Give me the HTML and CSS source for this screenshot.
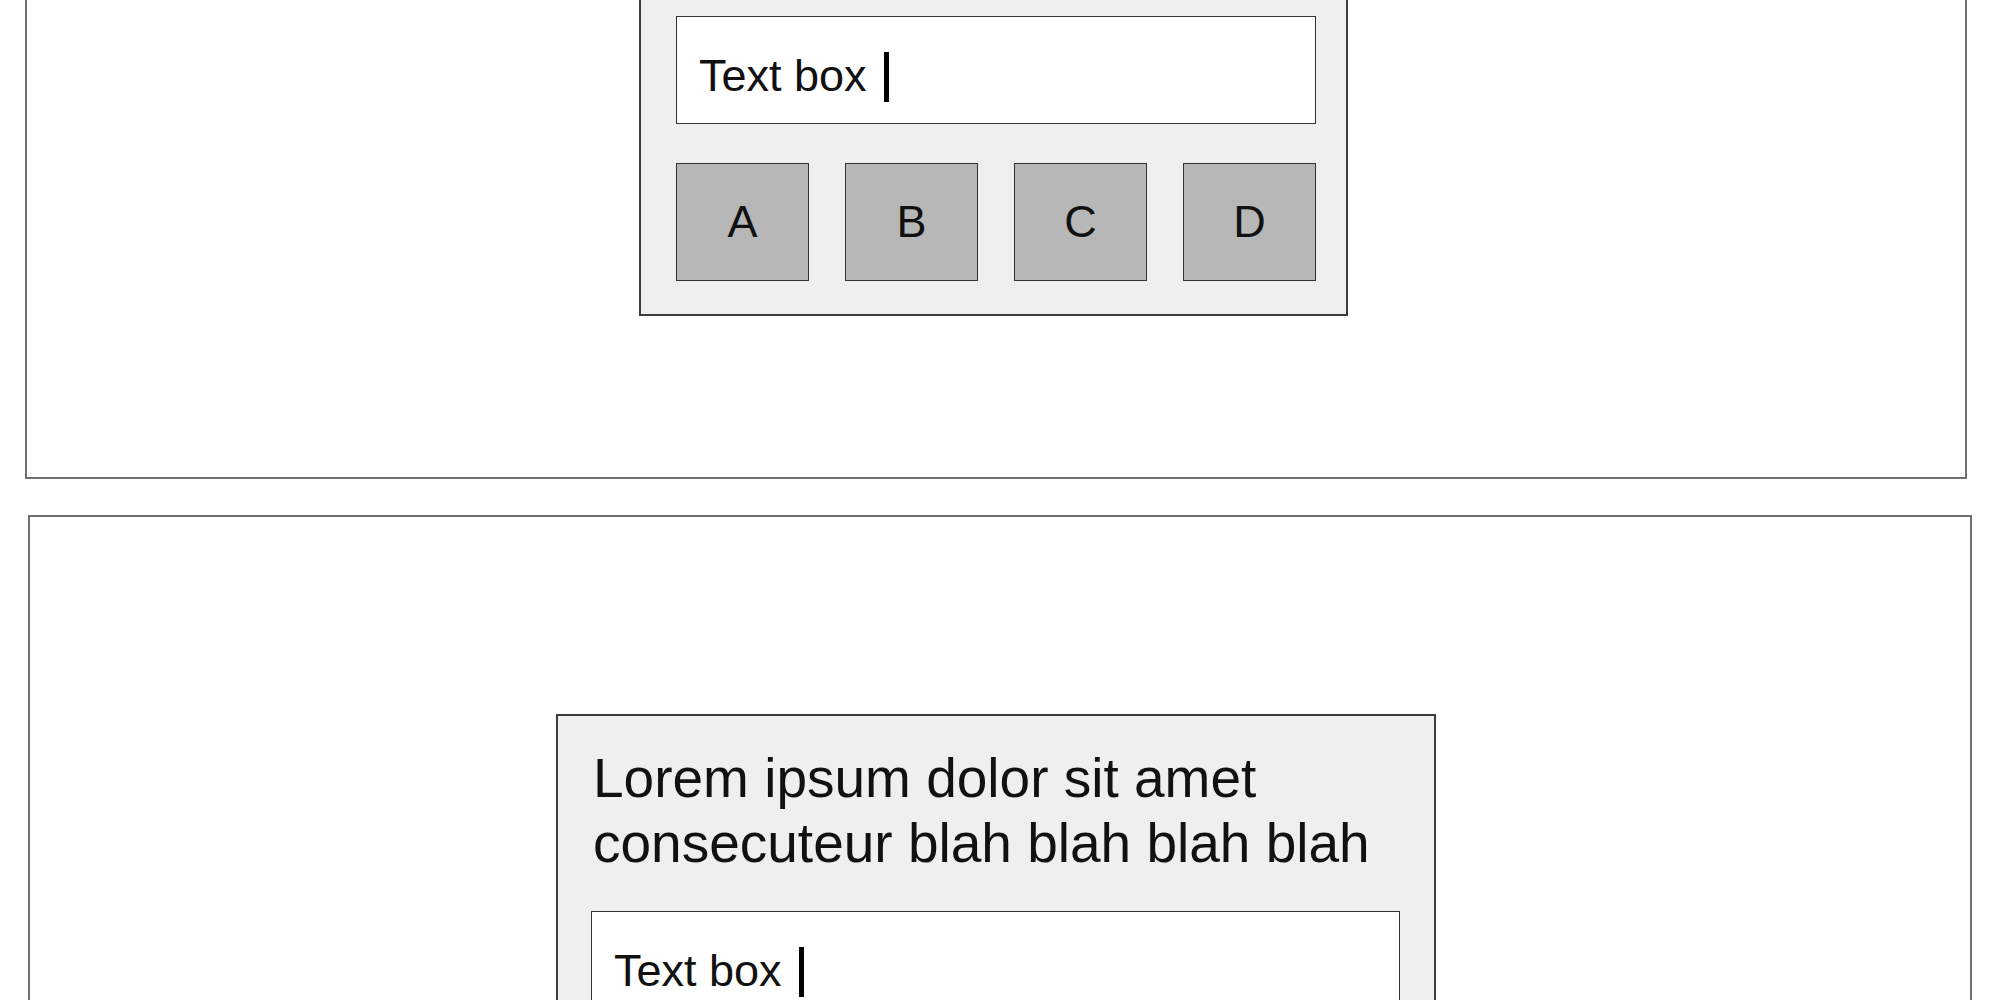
FILE: index.html
```html
<!DOCTYPE html>
<html lang="en">

<head>
    <meta charset="UTF-8">
    <meta name="viewport" content="width=device-width, initial-scale=1.0">
    <title>Dialog Layouts</title>
    <link rel="stylesheet" href="styles.css">
</head>

<body>
    <!-- layout 1: text box with four choice buttons -->
    <div class="screen screen-top">
        <div class="dialog dialog-choices">
            <div class="text-box">Text box<span class="caret"></span></div>
            <div class="choices">
                <button class="choice">A</button>
                <button class="choice">B</button>
                <button class="choice">C</button>
                <button class="choice">D</button>
            </div>
        </div>
    </div>

    <!-- layout 2: prompt text above the text box -->
    <div class="screen screen-bottom">
        <div class="dialog dialog-prompt">
            <p class="prompt">Lorem ipsum dolor sit amet<br>consecuteur blah blah blah blah</p>
            <div class="text-box">Text box<span class="caret"></span></div>
        </div>
    </div>
</body>

</html>
```

FILE: styles.css
```css
body {
    font-family: "Liberation Sans", Arial, sans-serif;
    margin: 0;
    padding: 0;
    background-color: #fff;
    color: #111;
    overflow: hidden;
}

.screen {
    border: 2px solid #707070;
    box-sizing: border-box;
    display: flex;
    justify-content: center;
    align-items: flex-start;
}

.screen-top {
    margin: -219px 33px 0 25px;
    height: 698px;
    padding: 197px 5px 0 0;
}

.screen-bottom {
    margin: 36px 28px 0 28px;
    height: 700px;
    padding: 197px 8px 0 0;
}

.dialog {
    background-color: #efefef;
    border: 2px solid #3c3c3c;
    box-sizing: border-box;
}

.dialog-choices {
    width: 709px;
    padding: 34px 30px 33px 35px;
}

.dialog-prompt {
    width: 880px;
    padding: 30px 34px 40px 33px;
}

.text-box {
    background-color: #fff;
    border: 1px solid #333;
    height: 108px;
    box-sizing: border-box;
    padding: 33px 0 0 22px;
    font-size: 45px;
    line-height: 52px;
}

.caret {
    display: inline-block;
    width: 5px;
    height: 50px;
    margin-left: 17px;
    vertical-align: -11px;
    background-color: #000;
}

.choices {
    display: flex;
    gap: 36px;
    margin-top: 39px;
}

.choice {
    flex: 1;
    height: 118px;
    margin: 0;
    padding: 0;
    background-color: #b7b7b7;
    border: 1px solid #333;
    font-family: inherit;
    font-size: 45px;
    color: #111;
}

.prompt {
    margin: 0 0 35px 2px;
    font-size: 55px;
    line-height: 65px;
}
```
